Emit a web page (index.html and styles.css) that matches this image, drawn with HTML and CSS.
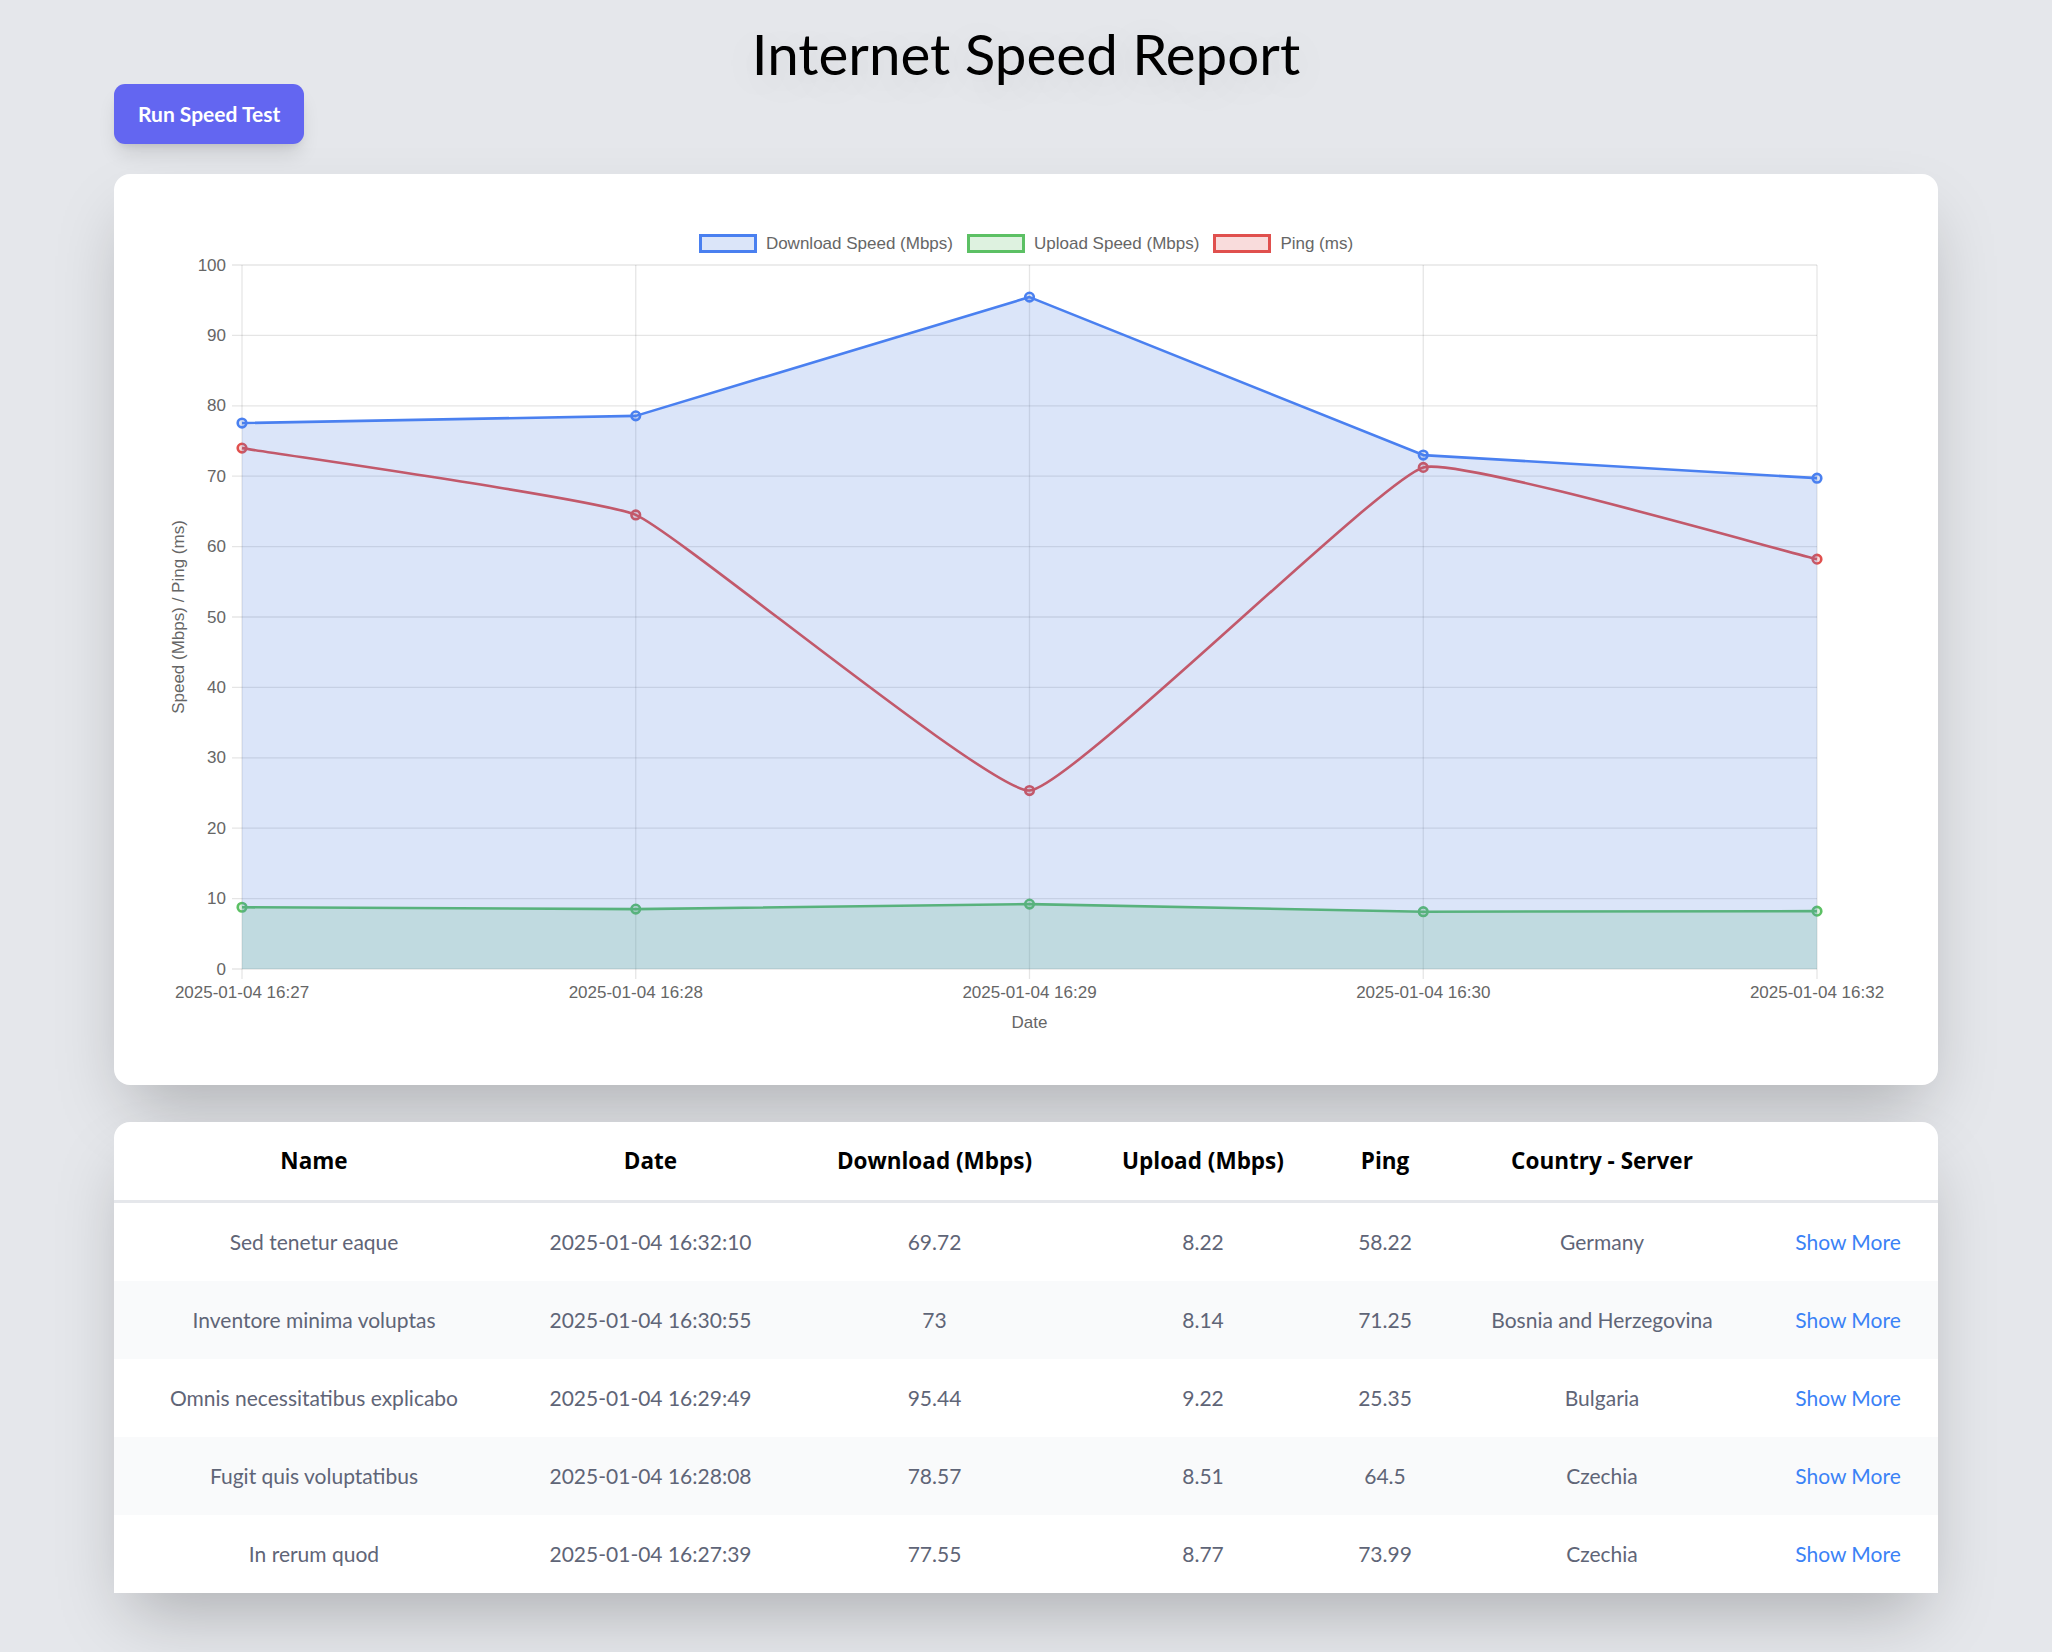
FILE: index.html
```html
<!DOCTYPE html>
<html lang="en">
<head>
<meta charset="utf-8">
<title>Internet Speed Report</title>
<link rel="stylesheet" href="styles.css">
</head>
<body>
<main class="page">
  <h1 class="title">Internet Speed Report</h1>
  <div class="toolbar">
    <button class="run-btn" type="button">Run Speed Test</button>
  </div>

  <section class="card chart-card">
    <div class="legend">
      <span class="legend-item"><span class="swatch swatch-download"></span>Download Speed (Mbps)</span>
      <span class="legend-item"><span class="swatch swatch-upload"></span>Upload Speed (Mbps)</span>
      <span class="legend-item"><span class="swatch swatch-ping"></span>Ping (ms)</span>
    </div>
    <svg class="chart" viewBox="0 0 1760 800" role="img" aria-label="Speed chart">
      <g class="grid">
        <line x1="86" y1="716" x2="1671" y2="716"/>
        <line x1="86" y1="645.6" x2="1671" y2="645.6"/>
        <line x1="86" y1="575.2" x2="1671" y2="575.2"/>
        <line x1="86" y1="504.8" x2="1671" y2="504.8"/>
        <line x1="86" y1="434.4" x2="1671" y2="434.4"/>
        <line x1="86" y1="364" x2="1671" y2="364"/>
        <line x1="86" y1="293.6" x2="1671" y2="293.6"/>
        <line x1="86" y1="223.2" x2="1671" y2="223.2"/>
        <line x1="86" y1="152.8" x2="1671" y2="152.8"/>
        <line x1="86" y1="82.4" x2="1671" y2="82.4"/>
        <line x1="86" y1="12" x2="1671" y2="12"/>
        <line x1="96" y1="12" x2="96" y2="726"/>
        <line x1="489.75" y1="12" x2="489.75" y2="726"/>
        <line x1="883.5" y1="12" x2="883.5" y2="726"/>
        <line x1="1277.25" y1="12" x2="1277.25" y2="726"/>
        <line x1="1671" y1="12" x2="1671" y2="726"/>
      </g>
      <g class="yticks">
        <text x="80" y="716">0</text>
        <text x="80" y="645.6">10</text>
        <text x="80" y="575.2">20</text>
        <text x="80" y="504.8">30</text>
        <text x="80" y="434.4">40</text>
        <text x="80" y="364">50</text>
        <text x="80" y="293.6">60</text>
        <text x="80" y="223.2">70</text>
        <text x="80" y="152.8">80</text>
        <text x="80" y="82.4">90</text>
        <text x="80" y="12">100</text>
      </g>
      <g class="xticks">
        <text x="96" y="739">2025-01-04 16:27</text>
        <text x="489.75" y="739">2025-01-04 16:28</text>
        <text x="883.5" y="739">2025-01-04 16:29</text>
        <text x="1277.25" y="739">2025-01-04 16:30</text>
        <text x="1671" y="739">2025-01-04 16:32</text>
      </g>
      <text class="axis-title" x="883.5" y="769">Date</text>
      <text class="axis-title" transform="translate(32 364) rotate(-90)">Speed (Mbps) / Ping (ms)</text>

      <path class="line line-ping" d="M96,195.11 C135.38,201.79 454.01,246.38 489.75,261.92 C532.76,280.62 845.27,539.85 883.5,537.54 C924.02,535.1 1233.35,227.3 1277.25,214.4 C1312.1,204.16 1631.63,296.96 1671,306.13"/>
      <g class="pts pts-ping">
        <circle cx="96" cy="195.11" r="4.3"/>
        <circle cx="489.75" cy="261.92" r="4.3"/>
        <circle cx="883.5" cy="537.54" r="4.3"/>
        <circle cx="1277.25" cy="214.4" r="4.3"/>
        <circle cx="1671" cy="306.13" r="4.3"/>
      </g>

      <path class="area area-upload" d="M96,654.26 L489.75,656.09 L883.5,651.09 L1277.25,658.69 L1671,658.13 L1671,716 L96,716 Z"/>
      <path class="line line-upload" d="M96,654.26 L489.75,656.09 L883.5,651.09 L1277.25,658.69 L1671,658.13"/>
      <g class="pts pts-upload">
        <circle cx="96" cy="654.26" r="4.3"/>
        <circle cx="489.75" cy="656.09" r="4.3"/>
        <circle cx="883.5" cy="651.09" r="4.3"/>
        <circle cx="1277.25" cy="658.69" r="4.3"/>
        <circle cx="1671" cy="658.13" r="4.3"/>
      </g>

      <path class="area area-download" d="M96,170.05 L489.75,162.87 L883.5,44.1 L1277.25,202.08 L1671,225.17 L1671,716 L96,716 Z"/>
      <path class="line line-download" d="M96,170.05 L489.75,162.87 L883.5,44.1 L1277.25,202.08 L1671,225.17"/>
      <g class="pts pts-download">
        <circle cx="96" cy="170.05" r="4.3"/>
        <circle cx="489.75" cy="162.87" r="4.3"/>
        <circle cx="883.5" cy="44.1" r="4.3"/>
        <circle cx="1277.25" cy="202.08" r="4.3"/>
        <circle cx="1671" cy="225.17" r="4.3"/>
      </g>
    </svg>
  </section>

  <section class="card table-card">
    <table class="results">
      <colgroup>
        <col class="c-name"><col class="c-date"><col class="c-down"><col class="c-up"><col class="c-ping"><col class="c-country"><col class="c-more">
      </colgroup>
      <thead>
        <tr>
          <th>Name</th><th>Date</th><th>Download (Mbps)</th><th>Upload (Mbps)</th><th>Ping</th><th>Country - Server</th><th></th>
        </tr>
      </thead>
      <tbody>
        <tr>
          <td>Sed tenetur eaque</td><td>2025-01-04 16:32:10</td><td>69.72</td><td>8.22</td><td>58.22</td><td>Germany</td><td><a class="show-more" href="#">Show More</a></td>
        </tr>
        <tr>
          <td>Inventore minima voluptas</td><td>2025-01-04 16:30:55</td><td>73</td><td>8.14</td><td>71.25</td><td>Bosnia and Herzegovina</td><td><a class="show-more" href="#">Show More</a></td>
        </tr>
        <tr>
          <td>Omnis necessitatibus explicabo</td><td>2025-01-04 16:29:49</td><td>95.44</td><td>9.22</td><td>25.35</td><td>Bulgaria</td><td><a class="show-more" href="#">Show More</a></td>
        </tr>
        <tr>
          <td>Fugit quis voluptatibus</td><td>2025-01-04 16:28:08</td><td>78.57</td><td>8.51</td><td>64.5</td><td>Czechia</td><td><a class="show-more" href="#">Show More</a></td>
        </tr>
        <tr>
          <td>In rerum quod</td><td>2025-01-04 16:27:39</td><td>77.55</td><td>8.77</td><td>73.99</td><td>Czechia</td><td><a class="show-more" href="#">Show More</a></td>
        </tr>
      </tbody>
    </table>
  </section>
</main>
</body>
</html>
```

FILE: styles.css
```css
* { box-sizing: border-box; }

html, body { margin: 0; }

body {
  background: #e5e7eb;
  font-family: Lato, "Liberation Sans", Arial, sans-serif;
  color: #111;
  padding: 23px 0 60px;
}

.page {
  max-width: 1824px;
  margin: 0 auto;
}

.title {
  margin: 0;
  text-align: center;
  font-size: 56.5px;
  line-height: 60px;
  font-weight: 400;
  color: #000;
  text-shadow: 0 8px 40px rgba(0, 0, 0, 0.12);
}

.toolbar {
  margin-top: 1px;
  display: flex;
}

.run-btn {
  height: 60px;
  padding: 0 24px;
  border: 0;
  border-radius: 11px;
  background: #6366f1;
  color: #fff;
  font-family: Lato, "Liberation Sans", Arial, sans-serif;
  font-weight: 700;
  font-size: 21px;
  line-height: 60px;
  box-shadow: 0 13px 20px -4px rgba(0, 0, 0, 0.12), 0 5px 8px -5px rgba(0, 0, 0, 0.12);
  cursor: pointer;
}

.card {
  background: #fff;
  border-radius: 16px;
  box-shadow: 0 33px 66px -16px rgba(0, 0, 0, 0.25);
}

.chart-card {
  margin-top: 30px;
  padding: 32px;
}

.legend {
  margin-top: 28px;
  height: 19px;
  display: flex;
  justify-content: center;
  align-items: center;
  gap: 14px;
  font-family: "Liberation Sans", Arial, sans-serif;
  font-size: 17px;
  color: #666;
}

.legend-item {
  display: flex;
  align-items: center;
  gap: 9px;
  white-space: nowrap;
}

.swatch {
  width: 58px;
  height: 19px;
  border: 3px solid;
}

.swatch-download { border-color: rgb(74, 128, 240); background: rgba(74, 126, 224, 0.2); }
.swatch-upload { border-color: rgb(92, 192, 100); background: rgba(92, 192, 100, 0.2); }
.swatch-ping { border-color: rgb(224, 80, 78); background: rgba(224, 80, 78, 0.2); }

.chart {
  display: block;
  width: 100%;
  height: 800px;
}

.grid line {
  stroke: rgba(0, 0, 0, 0.1);
  stroke-width: 1.3;
}

.yticks text,
.xticks text,
.axis-title {
  font-family: "Liberation Sans", Arial, sans-serif;
  font-size: 17px;
  fill: #666;
  dominant-baseline: central;
}

.yticks text { text-anchor: end; }
.xticks text { text-anchor: middle; }
.axis-title { text-anchor: middle; }

.line {
  fill: none;
  stroke-width: 2.6;
  stroke-linejoin: round;
}

.line-download { stroke: rgb(74, 128, 240); }
.line-upload { stroke: rgb(92, 192, 100); }
.line-ping { stroke: rgb(224, 80, 78); }

.area-download { fill: rgba(74, 126, 224, 0.2); }
.area-upload { fill: rgba(92, 192, 100, 0.2); }

.pts circle { stroke-width: 2.6; }
.pts-download circle { stroke: rgb(74, 128, 240); fill: rgba(74, 126, 224, 0.2); }
.pts-upload circle { stroke: rgb(92, 192, 100); fill: rgba(92, 192, 100, 0.2); }
.pts-ping circle { stroke: rgb(224, 80, 78); fill: rgba(224, 80, 78, 0.2); }

.table-card {
  margin-top: 37px;
}

.results {
  width: 100%;
  border-collapse: separate;
  border-spacing: 0;
  table-layout: fixed;
  font-size: 21px;
}

.c-name { width: 400px; }
.c-date { width: 273px; }
.c-down { width: 295px; }
.c-up { width: 242px; }
.c-ping { width: 122px; }
.c-country { width: 312px; }
.c-more { width: 180px; }

.results th {
  padding: 23px 4px;
  line-height: 32px;
  font-family: "Open Sans", Lato, "Liberation Sans", Arial, sans-serif;
  font-size: 22.5px;
  font-weight: 700;
  color: #000;
  text-align: center;
  border-bottom: 3px solid #e5e7eb;
  white-space: nowrap;
}

.results td {
  padding: 23px 4px;
  line-height: 32px;
  text-align: center;
  color: #5f6577;
  background: #fff;
  white-space: nowrap;
}

.results tbody tr:nth-child(even) td {
  background: #f9fafb;
}

.show-more {
  color: #3b82f6;
  text-decoration: none;
}
```
